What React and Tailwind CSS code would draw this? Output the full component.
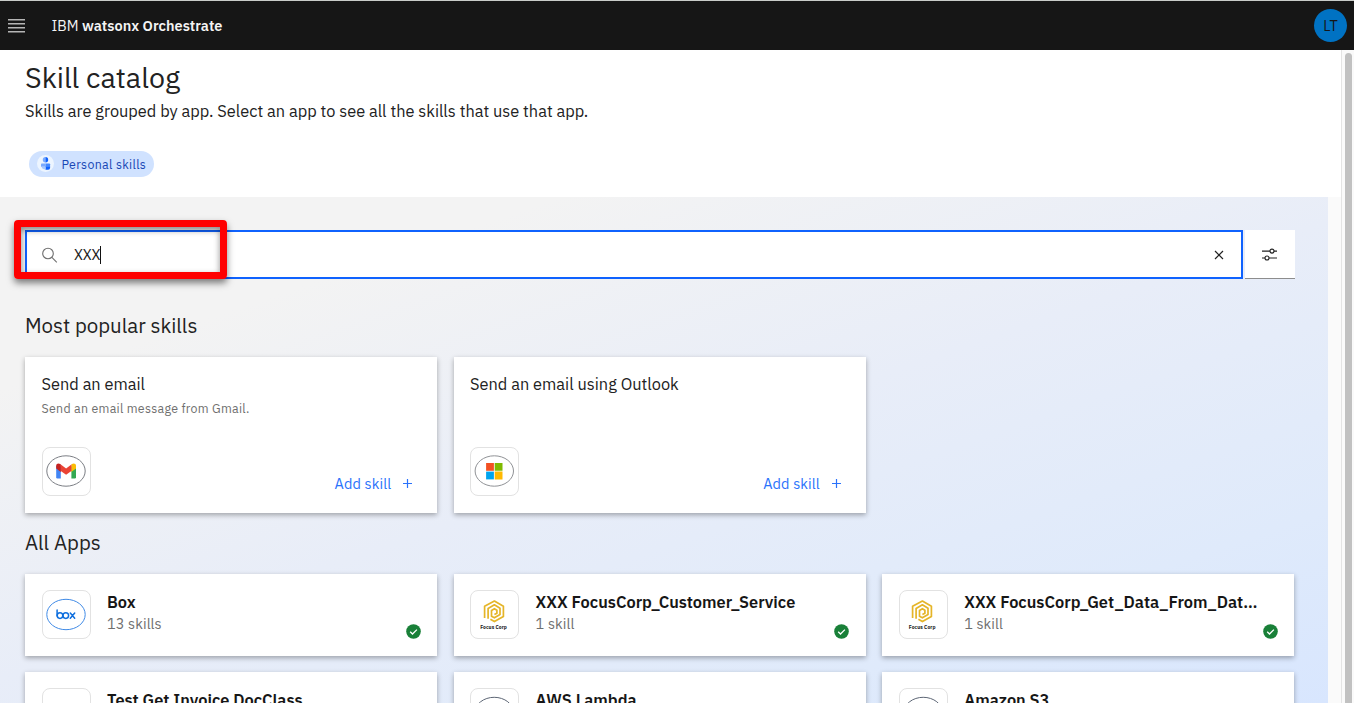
import React from "react";

function Tile({ children }) {
  return (
    <div className="flex h-[49px] w-[49px] shrink-0 items-center justify-center rounded-[8px] border border-[#e2e2e2] bg-white">
      {children}
    </div>
  );
}

function Gmail() {
  return (
    <svg width="41" height="33" viewBox="0.5 0.5 41 33">
      <ellipse cx="20.5" cy="16.5" rx="19.2" ry="15.2" fill="none" stroke="#7b7e84" />
      <path d="M10.7 11.2v11.6q0 1.2 1.2 1.2h3.4V12z" fill="#4285f4" />
      <path d="M30.5 11.2v11.6q0 1.2-1.2 1.2h-3.4V12z" fill="#34a853" />
      <path d="M10.7 14V11.3c0-2.3 2.4-3 4-1.8l.7.5v7.5z" fill="#c5221f" />
      <path d="M30.5 14V11.3c0-2.3-2.4-3-4-1.8l-.7.5v7.5z" fill="#fbbc04" />
      <path d="M15.3 10.1l5.3 4 5.3-4v6.3l-5.3 3.9-5.3-3.9z" fill="#ea4335" />
    </svg>
  );
}

function Microsoft() {
  return (
    <svg width="41" height="33" viewBox="0.2 0.5 41 33">
      <ellipse cx="20.5" cy="16.5" rx="19.2" ry="15.2" fill="none" stroke="#909296" />
      <path d="M12.3 8.5h7.8v7.8h-7.8z" fill="#f25022" />
      <path d="M20.9 8.5h7.8v7.8h-7.8z" fill="#7fba00" />
      <path d="M12.3 17.1h7.8v7.8h-7.8z" fill="#00a4ef" />
      <path d="M20.9 17.1h7.8v7.8h-7.8z" fill="#ffb900" />
    </svg>
  );
}

function BoxLogo() {
  return (
    <svg width="41" height="33" viewBox="0.5 0 41 33">
      <ellipse cx="20.5" cy="16.5" rx="19.2" ry="15.2" fill="none" stroke="#3f8ae6" />
      <g fill="none" stroke="#0f6fde" strokeWidth="1.5" strokeLinecap="round" strokeLinejoin="round">
        <path d="M11.6 11.9v6" />
        <circle cx="14.5" cy="17.6" r="2.8" />
        <circle cx="20.3" cy="17.6" r="2.8" />
        <path d="M24.8 15.1l4.4 5.2M29.2 15.1l-4.4 5.2" />
      </g>
    </svg>
  );
}

function FocusCorp() {
  return (
    <div className="flex flex-col items-center pt-[1px] pr-[2px]">
      <svg width="22" height="23" viewBox="0 0 22 23" fill="none" stroke="#e5b528" strokeWidth="1.7" strokeLinejoin="round">
        <path d="M1.6 18V6.2L11.4 1l9 5.2v10.2l-9 5.2-4-2.3" />
        <path d="M5.1 18.8V8.4l6.3-3.6 5.6 3.4v6.4l-5.6 3.2-2.9-1.6V10.4l2.9-1.7 2.5 1.6v3l-2.5 1.3" />
      </svg>
      <span className="mt-px text-[5px] leading-[6px] font-black tracking-[0.08px] text-[#222]">Focus Corp</span>
    </div>
  );
}

function RingLogo() {
  return (
    <svg width="41" height="33" viewBox="0.3 0 41 33">
      <ellipse cx="20.5" cy="16.5" rx="19.2" ry="15.2" fill="none" stroke="#5d6675" />
    </svg>
  );
}

function Check() {
  return (
    <svg width="15" height="15" viewBox="0 0 15 15">
      <circle cx="7.5" cy="7.5" r="7.3" fill="#198038" />
      <path d="M4.2 7.7l2.3 2.3 4.4-4.4" fill="none" stroke="#fff" strokeWidth="1.3" />
    </svg>
  );
}

function SkillCard({ title, text, logo }) {
  return (
    <article className="flex h-[156px] flex-col justify-between bg-white px-[16.5px] pt-[16px] pb-[17.5px] shadow-[0_2px_5px_rgba(0,0,0,0.32)]">
      <div>
        <h3 className="text-[16.36px] leading-[22px] text-[#222]">{title}</h3>
        <p className="mt-[4.5px] text-[12.4px] leading-[17px] tracking-[0.28px] text-[#6f6f6f]">{text}</p>
      </div>
      <div className="flex items-end justify-between">
        <Tile>{logo}</Tile>
        <button className="flex items-center gap-[11px] pr-[7.5px] pb-[2px] text-[#2a72fb]">
          <span className="text-[14.5px] leading-[20px] tracking-[0.1px]">Add skill</span>
          <svg width="9" height="9" viewBox="0 0 9 9" className="mr-px ml-px" stroke="currentColor" strokeWidth="1.2">
            <path d="M4.5 0v9M0 4.5h9" />
          </svg>
        </button>
      </div>
    </article>
  );
}

function AppCard({ title, count, logo }) {
  return (
    <article className="flex h-[82px] bg-white pt-[16px] pr-[16.6px] pl-[16.5px] shadow-[0_2px_5px_rgba(0,0,0,0.32)]">
      <Tile>{logo}</Tile>
      <div className="ml-[16.5px] min-w-0 flex-1">
        <h3 className="mt-px text-[16.36px] leading-[22px] font-semibold whitespace-nowrap text-[#161616]">{title}</h3>
        <p className="text-[14.5px] leading-[22px] tracking-[0.08px] text-[#6f6f6f]">{count}</p>
      </div>
      <div className="mt-[34px]">
        <Check />
      </div>
    </article>
  );
}

const apps = [
  { title: "Box", count: "13 skills", logo: <BoxLogo /> },
  { title: "XXX FocusCorp_Customer_Service", count: "1 skill", logo: <FocusCorp /> },
  { title: "XXX FocusCorp_Get_Data_From_Dat…", count: "1 skill", logo: <FocusCorp /> },
  { title: "Test Get Invoice DocClass", count: "1 skill", logo: null },
  { title: "AWS Lambda", count: "2 skills", logo: <RingLogo /> },
  { title: "Amazon S3", count: "8 skills", logo: <RingLogo /> },
];

export default function App() {
  return (
    <div className="relative flex h-[703px] w-[1354px] flex-col overflow-hidden bg-white font-['IBM_Plex_Sans','Roboto',sans-serif] text-[#222]">
      <header className="flex h-[50px] shrink-0 items-center border-t border-[#c9ccc9] bg-[#161616] pr-[7px] pl-[8px]">
        <svg width="17" height="14" viewBox="0 0 17 14" fill="#b5b5b5">
          <path d="M0 0h17v1.6H0zM0 4h17v1.6H0zM0 8h17v1.6H0zM0 12h17v1.6H0z" />
        </svg>
        <div className="ml-[26.5px] text-[14.5px] leading-5 tracking-[0.02px] text-[#f4f4f4]">
          IBM <span className="font-semibold">watsonx Orchestrate</span>
        </div>
        <div className="ml-auto flex h-[33px] w-[33px] items-center justify-center rounded-full bg-[#0072c3] text-[14.5px] text-[#161616]">LT</div>
      </header>

      <div className="flex min-h-0 flex-1">
        <main className="flex w-[1341px] flex-col">
          <div className="h-[147px] shrink-0 pl-[25px]">
            <h1 className="pt-[9px] text-[28.65px] leading-[37px]">Skill catalog</h1>
            <p className="mt-[3px] text-[16.38px] leading-[24px]">
              Skills are grouped by app. Select an app to see all the skills that use that app.
            </p>
            <div className="mt-[28px] ml-[4px] flex h-[26px] w-[125px] items-center rounded-full bg-[#d0e2ff] pl-[8px]">
              <svg width="17" height="17" viewBox="0 0 17 17" className="-mt-[2px]">
                <circle cx="8.5" cy="8.5" r="8.5" fill="#edf5ff" />
                <path d="M8.5 2a2.6 2.6 0 0 0 0 5.4z" fill="#78a9ff" />
                <path d="M8.5 2a2.7 2.7 0 0 1 0 5.4z" fill="#0f62fe" />
                <path d="M4 9.2q0-.8.8-.8h3.9v3.4H4z" fill="#78a9ff" />
                <path d="M8.7 8.4h3.5q.9 0 .9.9v2.5H8.7z" fill="#4589ff" />
                <path d="M8.5 11.4h4.6v1.4q0 2-2 2H8.5z" fill="#0f62fe" />
                <path d="M4.6 11.8h3.9v2.7q-3.4 0-3.9-2.7z" fill="#a6c8ff" />
              </svg>
              <span className="ml-[7.5px] text-[12.4px] leading-4 tracking-[0.32px] text-[#1847b5]">Personal skills</span>
            </div>
          </div>

          <div className="flex min-h-0 flex-1 bg-[#fafafa]">
            <section className="w-[1328px] overflow-hidden bg-[linear-gradient(161deg,#f3f3f3_0%,#f3f3f3_20%,#e8edf8_50%,#dfeafb_80%,#d8e6fe_100%)] pt-[33px] pl-[25px]">
              <div className="flex h-[49px] gap-[2px]">
                <div className="relative flex w-[1218px] items-center border-2 border-[#0f62fe] bg-white pl-[15px]">
                  <svg width="16" height="16" viewBox="0.5 0 16 16" fill="none" stroke="#6f6f6f" strokeWidth="1.1">
                    <circle cx="6.5" cy="6.5" r="5.3" />
                    <path d="M10.4 10.4l4.9 4.9" />
                  </svg>
                  <span className="ml-[16px] text-[14.5px] leading-5 tracking-[-0.1px] text-[#222]">XXX</span>
                  <span className="h-[18px] w-px bg-[#111]" />
                  <svg width="10" height="10" viewBox="0 0 10 10" className="mr-[17px] ml-auto" stroke="#222" strokeWidth="1.2">
                    <path d="M1 1l8 8M9 1L1 9" />
                  </svg>
                  <div className="absolute -top-[12px] -left-[13px] h-[59px] w-[213px] rounded-[4px] border-[7px] border-[#fe0000] shadow-[0_4px_7px_rgba(0,0,0,0.5),inset_0_3px_6px_rgba(0,0,0,0.45)]" />
                </div>
                <div className="flex w-[49.5px] items-center justify-center border-b border-[#8d8d8d] bg-white">
                  <svg width="15" height="13" viewBox="0 0 15 13" fill="none" stroke="#222" strokeWidth="1.1">
                    <path d="M0 3.1h8M12 3.1h3M0 10h3M7 10h8" />
                    <circle cx="10" cy="3.1" r="2" />
                    <circle cx="5" cy="10" r="2" />
                  </svg>
                </div>
              </div>

              <h2 className="mt-[33px] text-[20.47px] leading-[28px]">Most popular skills</h2>
              <div className="mt-[17px] grid w-[1269.4px] grid-cols-3 gap-[16.4px]">
                <SkillCard title="Send an email" text="Send an email message from Gmail." logo={<Gmail />} />
                <SkillCard title="Send an email using Outlook" text="" logo={<Microsoft />} />
              </div>

              <h2 className="mt-[16px] text-[20.47px] leading-[28px]">All Apps</h2>
              <div className="mt-[17px] grid w-[1269.4px] grid-cols-3 gap-x-[16.4px] gap-y-[16px]">
                {apps.map((app) => (
                  <AppCard key={app.title} {...app} />
                ))}
              </div>
            </section>
          </div>
        </main>
        <div className="flex flex-1 justify-center border-l border-[#e4e4e4] bg-[#fafafa] pt-[3px]">
          <div className="h-[700px] w-[7px] rounded-t-full bg-[#c1c1c1]" />
        </div>
      </div>
    </div>
  );
}
